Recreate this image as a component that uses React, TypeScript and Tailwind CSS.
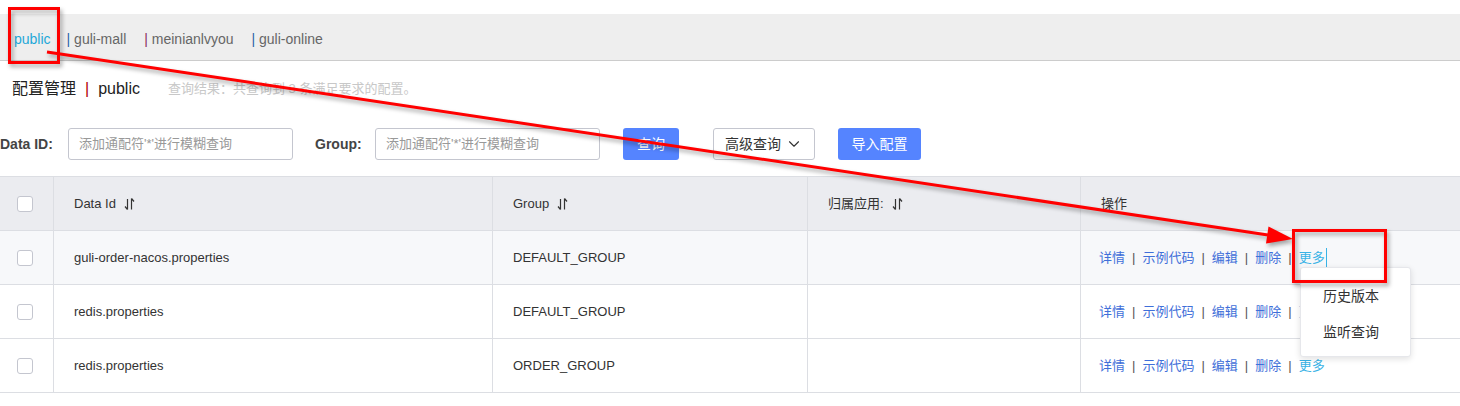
import { ChevronDown } from 'lucide-react';

const font = { fontFamily: '"Liberation Sans", "Noto Sans CJK SC", sans-serif' };

const rows = [
  { id: 'guli-order-nacos.properties', group: 'DEFAULT_GROUP', hover: true },
  { id: 'redis.properties', group: 'DEFAULT_GROUP', hover: false },
  { id: 'redis.properties', group: 'ORDER_GROUP', hover: false },
];

const SortIcon = () => (
  <svg width="11" height="14" viewBox="0 0 11 14" className="ml-2" fill="none" stroke="#333" strokeWidth="1.2">
    <path d="M3.5 2v10.5M3.5 12.5L1 9.5" />
    <path d="M7.5 12.5V1.5M7.5 1.5l2.5 3" />
  </svg>
);

const Checkbox = () => (
  <div className="w-4 h-4 rounded-[3px] border border-[#c4c6cf] bg-white" />
);

const Actions = ({ moreActive }: { moreActive?: boolean }) => (
  <div className="flex items-center text-[13px] text-[#3f6fd9]">
    <span>详情</span>
    <span className="mx-[7px] text-[#555]">|</span>
    <span>示例代码</span>
    <span className="mx-[7px] text-[#555]">|</span>
    <span>编辑</span>
    <span className="mx-[7px] text-[#555]">|</span>
    <span>删除</span>
    <span className="mx-[7px] text-[#555]">|</span>
    <span className={moreActive ? 'text-[#3ab3e6] border-r border-[#3ab3e6] pr-px' : 'text-[#3ab3e6]'}>更多</span>
  </div>
);

const cell = 'flex items-center border-l border-[#dcdee3] pl-5';

export default function App() {
  return (
    <div className="relative w-[1460px] h-[406px] bg-white overflow-hidden text-[#333]" style={font}>
      {/* namespace tabs */}
      <div className="mt-[14px] h-[47px] bg-[#eeeeee] border-b border-[#cccccc] flex items-center pt-[4px] text-[14px] text-[#666]">
        <span className="ml-[14px] text-[#1fa8d8]">public</span>
        <span className="ml-[16px]"><span className="text-[#2f5fa6]">|</span> guli-mall</span>
        <span className="ml-[18px]"><span className="text-[#8a2e62]">|</span> meinianlvyou</span>
        <span className="ml-[18px]"><span className="text-[#2f5fa6]">|</span> guli-online</span>
      </div>

      {/* title */}
      <div className="h-[56px] flex items-center pl-[12px]">
        <span className="text-[16px] text-[#222]">配置管理</span>
        <span className="mx-[9px] text-[16px] text-[#b00000]">|</span>
        <span className="text-[16px] text-[#222]">public</span>
        <span className="ml-[28px] text-[13px] text-[#c8c8c8]">查询结果：共查询到 3 条满足要求的配置。</span>
      </div>

      {/* search form */}
      <div className="mt-[11px] h-8 flex items-center text-[14px]">
        <span className="w-[54px] font-bold text-[#444]">Data ID:</span>
        <div className="ml-[14px] w-[225px] h-8 border border-[#c4c6cf] rounded-[3px] flex items-center pl-[10px] text-[13px] text-[#999]">
          添加通配符'*'进行模糊查询
        </div>
        <span className="ml-[22px] w-[46px] font-bold text-[#444]">Group:</span>
        <div className="ml-[14px] w-[225px] h-8 border border-[#c4c6cf] rounded-[3px] flex items-center pl-[10px] text-[13px] text-[#999]">
          添加通配符'*'进行模糊查询
        </div>
        <button className="ml-[23px] w-[56px] h-8 rounded-[3px] bg-[#5584ff] text-white text-[14px]">查询</button>
        <button className="ml-[34px] w-[102px] h-8 rounded-[3px] border border-[#c4c6cf] bg-white text-[14px] text-[#333] flex items-center justify-center gap-1">
          高级查询
          <ChevronDown size={18} strokeWidth={1.5} />
        </button>
        <button className="ml-[23px] w-[83px] h-8 rounded-[3px] bg-[#5584ff] text-white text-[14px]">导入配置</button>
      </div>

      {/* table */}
      <div className="mt-4 border-t border-[#dcdee3] text-[13px]">
        <div className="grid grid-cols-[53px_439px_315px_273px_1fr] h-[54px] bg-[#ebecf0] border-b border-[#dcdee3]">
          <div className="flex items-center pl-[17px]"><Checkbox /></div>
          <div className={cell}>Data Id<SortIcon /></div>
          <div className={cell}>Group<SortIcon /></div>
          <div className={cell}>归属应用:<SortIcon /></div>
          <div className={cell}>操作</div>
        </div>
        {rows.map((r, i) => (
          <div
            key={i}
            className={`grid grid-cols-[53px_439px_315px_273px_1fr] h-[54px] border-b border-[#dcdee3] ${r.hover ? 'bg-[#f7f8fa]' : 'bg-white'}`}
          >
            <div className="flex items-center pl-[17px]"><Checkbox /></div>
            <div className={cell}>{r.id}</div>
            <div className={cell}>{r.group}</div>
            <div className={cell}></div>
            <div className="flex items-center border-l border-[#dcdee3] pl-[18px]"><Actions moreActive={r.hover} /></div>
          </div>
        ))}
      </div>

      {/* dropdown menu */}
      <div className="absolute left-[1300px] top-[267px] w-[111px] h-[90px] bg-white border border-[#e6e7eb] rounded-[3px] shadow-[0_2px_6px_rgba(0,0,0,0.12)] pt-[10px] text-[14px] text-[#333]">
        <div className="h-9 flex items-center pl-[22px]">历史版本</div>
        <div className="h-9 flex items-center pl-[22px]">监听查询</div>
      </div>

      {/* red annotations */}
      <svg className="absolute left-0 top-0 pointer-events-none" width="1460" height="406" style={{ filter: 'drop-shadow(2px 3px 2px rgba(0,0,0,0.35))' }}>
        <rect x="9.5" y="8.5" width="49" height="54" fill="none" stroke="#ff0000" strokeWidth="3" />
        <rect x="1293.5" y="230.5" width="92" height="51" fill="none" stroke="#ff0000" strokeWidth="3" />
        <line x1="47" y1="52" x2="1268" y2="235" stroke="#ff0000" strokeWidth="3" />
        <polygon points="1293,239 1266,243.5 1268.5,226.5" fill="#ff0000" />
      </svg>
    </div>
  );
}
